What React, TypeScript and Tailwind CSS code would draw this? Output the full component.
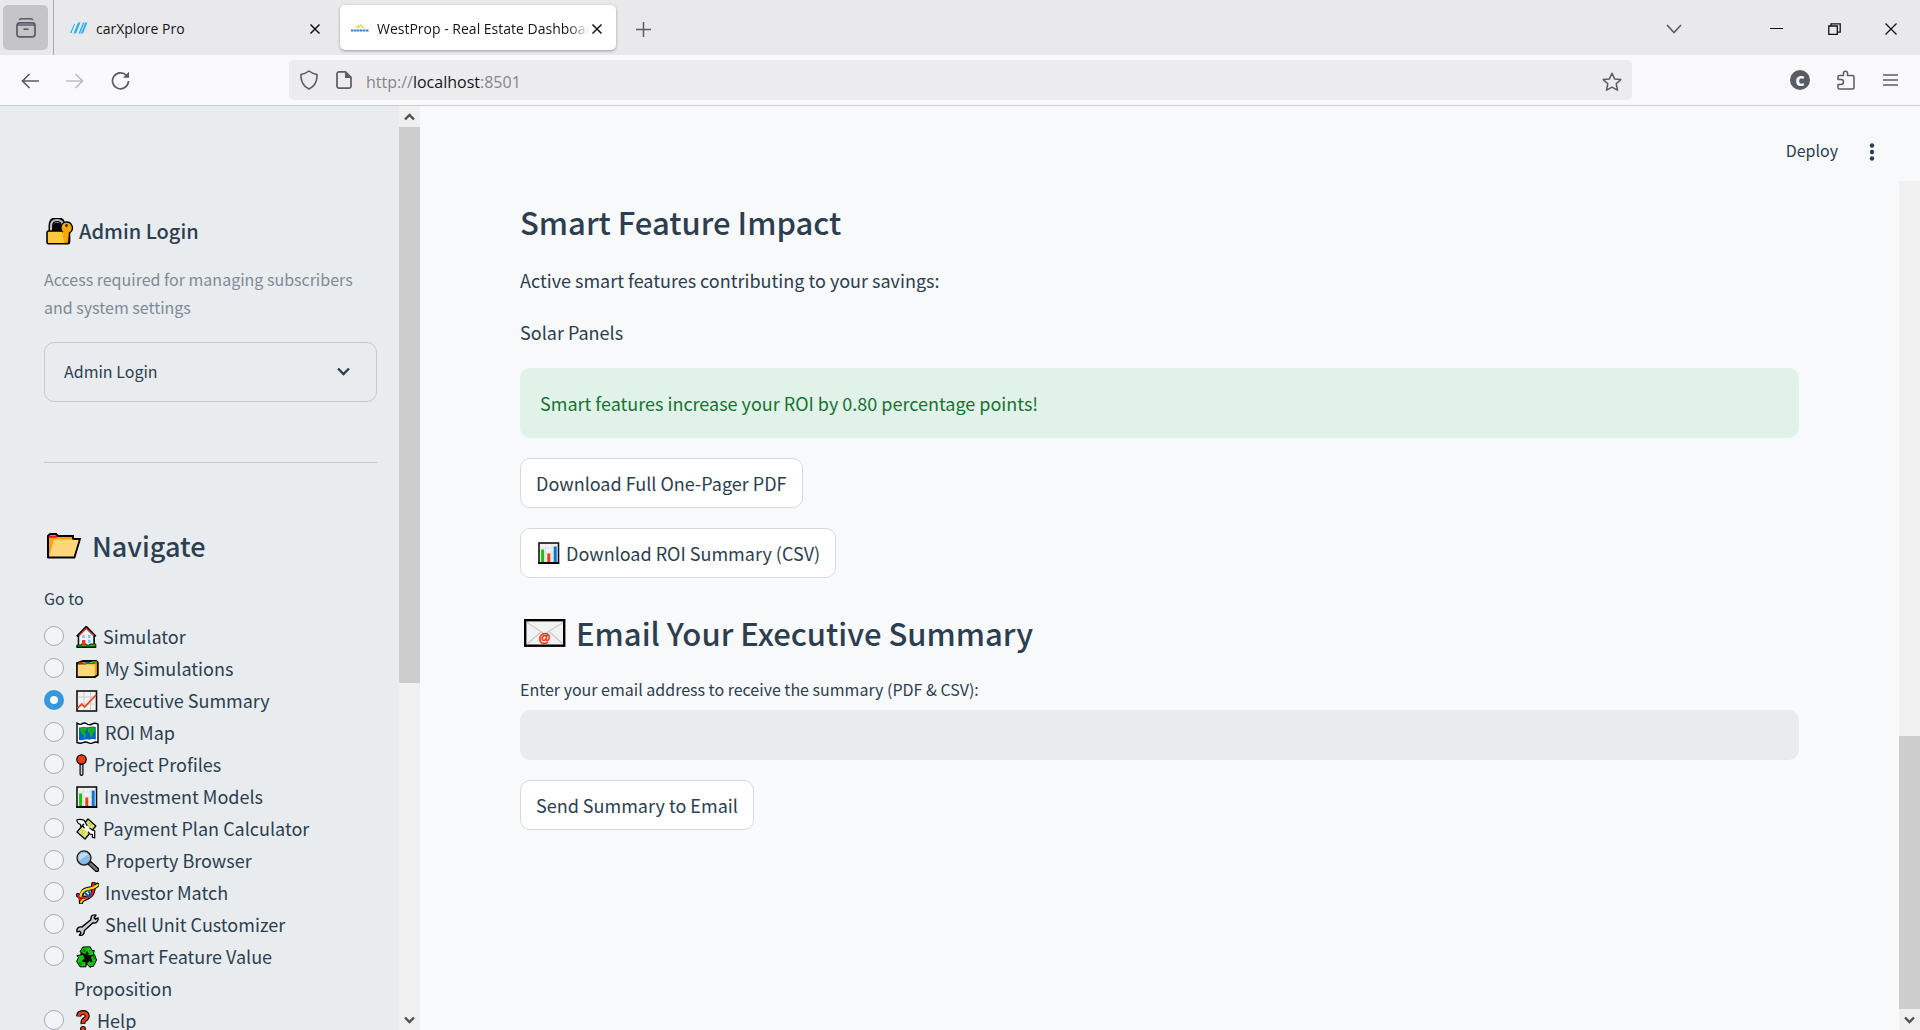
import React, { useState } from "react";

type IconProps = { w: number; h: number; box: string; className?: string; children: React.ReactNode };

function Art({ w, h, box, className = "", children }: IconProps) {
  return (
    <svg
      width={w}
      height={h}
      viewBox={box}
      fill="none"
      aria-hidden="true"
      className={`inline-block shrink-0 ${className}`}
    >
      {children}
    </svg>
  );
}

const navIcon = "ml-0.5 mr-1.5 -mt-1 align-middle";

function BarChartIcon({ className = "" }: { className?: string }) {
  return (
    <Art w={22} h={22} box="0 0 22 22" className={className}>
      <rect x="1" y="1" width="19.5" height="20" fill="#f2f2f2" stroke="#111" strokeWidth="1.6" />
      <path d="M1.8 6h18M1.8 11h18M1.8 16h18M7.5 2v18M14 2v18" stroke="#ddd" strokeWidth="0.8" />
      <path d="M4.6 7.5V20" stroke="#16c60c" strokeWidth="3" />
      <path d="M10.8 11.5V20" stroke="#f03a17" strokeWidth="3" />
      <path d="M17.2 4.5V20" stroke="#0078d7" strokeWidth="3" />
      <path d="M0.2 21h21" stroke="#000" strokeWidth="2" />
    </Art>
  );
}

const items = [
  {
    label: "Simulator",
    icon: (
      <Art w={21} h={22} box="0 0 21 22" className={navIcon}>
        <path d="M2.5 9.5 10.3 2l7.8 7.5V20h-15.6z" fill="#f2f2f2" stroke="#000" strokeWidth="1.6" />
        <path d="M3.4 19.6V9l6.8-6 6.8 6" stroke="#ccc" strokeWidth="0.6" />
        <path d="M1 10.5 10.3 1l9.3 9.5" stroke="#000" strokeWidth="2.4" />
        <path d="M2.8 9.7 10.3 2.4l7.5 7.3" stroke="#f03a17" strokeWidth="1.3" />
        <path d="M6.3 9h2.6v3H6.3zM12 9h2.6v3H12zM12 13.7h2.6v3H12z" fill="#61d6ff" />
        <path d="M0.8 19h4.4v-1h5v1h3.6v-1h6v3.2H0.8z" fill="#16c60c" stroke="#000" strokeWidth="0.8" />
        <path d="M0.4 21.2h19.8" stroke="#000" strokeWidth="1.3" />
        <path d="M6 14v5.6h3.4V14z" fill="#f03a17" />
      </Art>
    ),
  },
  {
    label: "My Simulations",
    icon: (
      <Art w={23} h={18} box="0 0 23 18" className={navIcon}>
        <path d="M1 3 7 1h8l5-.4 1.800 2V15l-3 2H1z" fill="#f7a500" stroke="#000" strokeWidth="1.800" />
        <path d="M2.500 3h5" stroke="#e81224" strokeWidth="1.300" />
        <path d="M9 2.300h5" stroke="#0063b1" strokeWidth="1.300" />
        <path d="M15.500 2h4.800v1.800" stroke="#16c60c" strokeWidth="1.300" />
        <path d="M1.800 4.500h17V15q0 1.200-1.600 1.200H1.800z" fill="#ffd679" />
        <path d="M1.800 4h8l1-.7h8.500" stroke="#000" strokeWidth="0.600" />
      </Art>
    ),
  },
  {
    label: "Executive Summary",
    icon: (
      <Art w={22} h={22} box="0 0 22 22" className={navIcon}>
        <rect x="1" y="1" width="19.5" height="20" fill="#f2f2f2" stroke="#111" strokeWidth="1.6" />
        <path d="M1.8 7h18M1.8 14h18M8 2v18M14.5 2v18" stroke="#ccc" strokeWidth="1" />
        <path d="m1.6 18.3 4.2-4.1 3 2.6L20 5" stroke="#f03a17" strokeWidth="1.6" />
      </Art>
    ),
  },
  {
    label: "ROI Map",
    icon: (
      <Art w={23} h={22} box="0 0 23 22" className={navIcon}>
        <path
          d="M1 1.200q3 2 5.300.5t5.200.6q2.800 1 5-.5 2.300-1.200 5.500.4v18.300q-2.500-1-5.100.300t-5-.3q-2.700-1.200-5 .2-2.700 1.200-5.900-.2z"
          fill="#fff"
          stroke="#000"
          strokeWidth="1.400"
        />
        <path d="M3 5.200q3 .6 5-.5 2.800.9 5.200.2 3.500-.9 6.600 0v12.600q-3.500-1-6.400.3-2.700-.9-5 0-2.600.7-5.400.2z" fill="#0063d1" />
        <path
          d="m4.300 5.800 2.500-.5 4.500.300-.6 2-1.700 1.300-.4 1.700 1.500 1.600-.7 4-1.300.6-.6-3.300-1.800-2L4.300 9zM12.300 6.200l4-.9 2.500.5v3.900l-1.800 1.100-.8 4.200-1.500.6-1-4-1.900-1.500z"
          fill="#16b010"
        />
      </Art>
    ),
  },
  {
    label: "Project Profiles",
    icon: (
      <Art w={12} h={22} box="0 0 12 22" className={navIcon}>
        <path d="M5.500 10v10" stroke="#000" strokeWidth="4" strokeLinecap="round" />
        <path d="M5.500 11v8.800" stroke="#ccc" strokeWidth="1.700" strokeLinecap="round" />
        <circle cx="5.500" cy="5.500" r="4.700" fill="#f03a17" stroke="#000" strokeWidth="1.200" />
      </Art>
    ),
  },
  { label: "Investment Models", icon: <BarChartIcon className={navIcon} /> },
  {
    label: "Payment Plan Calculator",
    icon: (
      <Art w={21} h={22} box="0 0 21 22" className={navIcon}>
        <path d="M1 14 12 1l7.800 7L9 21z" fill="#eff48c" stroke="#000" strokeWidth="1.300" strokeLinejoin="round" />
        <path d="M3.500 14 12 3.600l5.200 4.600L9 18.500z" stroke="#b9bf4a" strokeWidth="0.800" />
        <circle cx="13" cy="7" r="1.500" stroke="#a4ad2c" strokeWidth="0.800" />
        <circle cx="7.500" cy="14" r="1.500" stroke="#a4ad2c" strokeWidth="0.800" />
        <path d="M7 8.500 9.500 6l5.500 6-2.500 2.500z" fill="#fff" />
        <path d="M.8 1.800Q4.500.6 8 2.200l3.200 5.600M.8 1.800Q1 5.500 4.500 6.500l.5 2 2-.3 1.500 2" fill="#fff" stroke="#000" strokeWidth="1.200" strokeLinejoin="round" />
        <path d="M13.500 9.800l2.700 2.200 2.500.8v7.200l-2.400-.8.200-2.700-2.500-.3-2-2.500" fill="#fff" stroke="#000" strokeWidth="1.200" strokeLinejoin="round" />
      </Art>
    ),
  },
  {
    label: "Property Browser",
    icon: (
      <Art w={23} h={22} box="0 0 23 22" className={navIcon}>
        <path d="m12.500 12 8.300 7.700" stroke="#000" strokeWidth="5" strokeLinecap="round" />
        <path d="m14.500 14 6 5.500" stroke="#767676" strokeWidth="2.800" strokeLinecap="round" />
        <circle cx="8" cy="8" r="6.900" fill="#83beec" stroke="#222" strokeWidth="1.500" />
        <path d="M2.800 10.500A5.500 5.500 0 0 1 12.700 4.500z" fill="#b8defa" />
        <circle cx="8" cy="8" r="5.800" stroke="#a8a8a8" strokeWidth="0.900" />
      </Art>
    ),
  },
  {
    label: "Investor Match",
    icon: (
      <Art w={23} h={22} box="0 0 23 22" className={navIcon}>
        <path d="M1.800 13C6 17.500 14 16.500 16.500 11S16 4 17.500 1.500" stroke="#000" strokeWidth="4.200" strokeLinecap="round" />
        <path d="M5 20.500C4 11 7 7.500 12 6.800S19.500 5.500 21.500 2.800" stroke="#000" strokeWidth="4.200" strokeLinecap="round" />
        <path d="M3.500 17 6 18M8 9.500l6 6M11.500 7.500l4.500 5M17 2.500l3.500 1.500" stroke="#3a96dd" strokeWidth="1.300" />
        <path d="M5 20.500C6 17.500 9 17 12 16" stroke="#000" strokeWidth="3.400" strokeLinecap="round" />
        <path d="M5 20.500C5.500 17.500 8.500 17 11 15.800" stroke="#fce100" strokeWidth="1.900" strokeLinecap="round" />
        <path d="M1.800 13C6 17.500 14 16.500 16.500 11S16 4 17.500 1.500" stroke="#e81224" strokeWidth="2.200" strokeLinecap="round" />
        <path d="M4.600 14C5.500 9 8.500 7.300 12 6.800S19.500 5.500 21.500 2.800" stroke="#fce100" strokeWidth="2.200" strokeLinecap="round" />
        <path d="M1.800 13 4.500 18.500" stroke="#e81224" strokeWidth="1.600" strokeLinecap="round" />
        <path d="m8.500 10.500 5 5M12 9l3 3.500" stroke="#0063b1" strokeWidth="1.800" />
      </Art>
    ),
  },
  {
    label: "Shell Unit Customizer",
    icon: (
      <Art w={23} h={22} box="0 0 23 22" className={navIcon}>
        <path
          d="m14.800 5.800.5-3.500Q17.300.200 20 1.200l-1.800 2.600 1.200 1.400 2.600-1.300q.5 3-1.500 4.400-1.700 1.100-3.500.5l-8.800 8q.3 2.400-1.500 4-1.500 1-3.300.4l1.500-2.400-1.200-1.700-2.700.8q-.6-2.900 1.300-4.300 1.500-1.100 3.500-.5z"
          fill="#ccc"
          stroke="#000"
          strokeWidth="1.400"
          strokeLinejoin="round"
        />
      </Art>
    ),
  },
  {
    label: "Smart Feature Value Proposition",
    icon: (
      <Art w={21} h={22} box="0 0 21 22" className={navIcon}>
        <path d="M6 3h8l4 9-2 7H5L3 12z" fill="#000" />
        <g fill="#16c60c" stroke="#000" strokeWidth="1" strokeLinejoin="round">
          <path d="m6.800 1 7.400-.2 2.300 4.200 1.800-.6L17 10.200 10.800 8.800l1.700-1.200-1.500-2L9.300 9 4 5.800z" />
          <path d="m.8 9.800 6.500-1.600 2.200 6-2-.6L6.600 15.600H10v5.200H4L.6 15.500l1.900-4z" />
          <path d="m14.200 11 4.300-2.500 2 5.500-3.200 6.500h-3v1.100L10.500 17.700l3.800-4v2h1.800z" />
        </g>
        <path d="m8 1.800 2.300 2.200-1.700 3-2.600-1.500zM2 16h3.500v3.500H4.300zM16.200 11l1.400 3.300 1.700-1.200-1.200-3.200z" fill="#0f8f0f" />
      </Art>
    ),
  },
  {
    label: "Help",
    icon: (
      <Art w={15} h={22} box="0 0 15 22" className={navIcon}>
        <path d="M2.500 6.500Q2.800 2.600 7 2.600t4.200 3.200Q11.300 8 9 9.300T7 14" stroke="#000" strokeWidth="5" />
        <circle cx="7" cy="18.800" r="2.900" fill="#000" />
        <path d="M2.500 5.800Q3.300 2.600 7 2.600t4.200 3.200Q11.300 8 9 9.300T7 13.400" stroke="#f03a17" strokeWidth="2.900" />
        <circle cx="7" cy="18.800" r="1.800" fill="#f03a17" />
      </Art>
    ),
  },
];

function CloseIcon() {
  return (
    <Art w={12} h={12} box="0 0 12 12">
      <path d="m1.500 1.500 9 9m0-9-9 9" stroke="#15141a" strokeWidth="1.500" />
    </Art>
  );
}

function TabStrip() {
  return (
    <div className="flex h-[55px] shrink-0 items-center bg-[#e9e9eb] font-['Open_Sans','Noto_Sans',sans-serif] text-[#15141a]">
      <button
        aria-label="Recent browsing"
        className="ml-[3px] flex h-[45px] w-[45px] shrink-0 items-center justify-center rounded-[5px] bg-[#c5c5c7]"
      >
        <Art w={20} h={20} box="0 0 20 20">
          <path d="M3 1.800Q4 .8 6 .8h8q2 0 3 1" stroke="#5b5b66" strokeWidth="1.500" />
          <rect x="1" y="4.800" width="18" height="14" rx="2.500" stroke="#5b5b66" strokeWidth="1.700" />
          <path d="M1 7h18" stroke="#5b5b66" strokeWidth="1.500" />
          <path d="M7.500 11.200h5" stroke="#5b5b66" strokeWidth="1.700" />
        </Art>
      </button>
      <div className="ml-[5px] h-full w-px shrink-0 bg-[#a9a9ad]" />
      <div className="flex h-[45px] w-[286px] shrink-0 items-center pr-[19px] pl-4">
        <Art w={18} h={12} box="0 0 18 12">
          <path d="M0 11 4 2h1L1.500 11zM3.500 11.500 8 .5h2.500L6 11.500zM8.500 11.500 13 .5h4.500L13 11.500z" fill="#2fb1ee" />
          <path d="m10.500 11.500 4.500-11" stroke="#e9e9eb" strokeWidth="0.800" />
        </Art>
        <span className="ml-2 flex-1 truncate pt-0.5 text-[14px]">carXplore Pro</span>
        <button aria-label="Close carXplore Pro">
          <CloseIcon />
        </button>
      </div>
      <div className="flex h-[45px] w-[276px] shrink-0 items-center rounded-[5px] bg-white pr-[13px] pl-[11px] shadow-[0_1px_3px_rgba(0,0,0,0.35)]">
        <Art w={18} h={8} box="0 0 18 8">
          <path d="m5 4 2-2 1 1 1.500-2L13 4" stroke="#f2c94c" strokeWidth="1.200" />
          <path d="M0 6.500h18" stroke="#3f7fc4" strokeWidth="2" strokeDasharray="2.500 .5" />
        </Art>
        <span className="ml-2 flex-1 overflow-hidden pt-0.5 text-[14px] whitespace-nowrap [mask-image:linear-gradient(to_right,black_90%,transparent)]">
          WestProp - Real Estate Dashboard
        </span>
        <button aria-label="Close WestProp" className="ml-0.5">
          <CloseIcon />
        </button>
      </div>
      <button aria-label="New tab" className="ml-5">
        <Art w={15} h={15} box="0 0 15 15">
          <path d="M7.500 0v15M0 7.500h15" stroke="#5b5b66" strokeWidth="1.500" />
        </Art>
      </button>
      <div className="ml-auto flex items-center pr-[23px]">
        <button aria-label="List all tabs" className="mr-[88px]">
          <Art w={16} h={10} box="0 0 16 10">
            <path d="m1 1 7 7.500L15 1" stroke="#5b5b66" strokeWidth="1.600" />
          </Art>
        </button>
        <button aria-label="Minimize" className="mr-[45px]">
          <Art w={13} h={12} box="0 0 13 12">
            <path d="M0 5.500h13" stroke="#111" />
          </Art>
        </button>
        <button aria-label="Restore" className="mr-11">
          <Art w={13} h={12} box="0 0 13 12">
            <path d="M.8 3h8.500v8.300H.8zM3 3V.8h9.200v8.400H9.500" stroke="#111" strokeWidth="1.300" />
          </Art>
        </button>
        <button aria-label="Close window">
          <Art w={12} h={12} box="0 0 12 12">
            <path d="m.5.5 11 11m0-11-11 11" stroke="#111" strokeWidth="1.300" />
          </Art>
        </button>
      </div>
    </div>
  );
}

function Toolbar() {
  return (
    <div className="flex h-[51px] shrink-0 items-center border-b border-[#ccccce] bg-[#f9f9fb] font-['Open_Sans','Noto_Sans',sans-serif]">
      <div className="flex w-[289px] shrink-0 items-center pb-0.5 pl-[21px]">
        <button aria-label="Back" className="mr-[27px]">
          <Art w={18} h={16} box="0 0 18 16">
            <path d="M18 8H1.500M8.500 1l-7 7 7 7" stroke="#5b5b66" strokeWidth="1.700" />
          </Art>
        </button>
        <button aria-label="Forward" className="mr-[27px]" disabled>
          <Art w={18} h={16} box="0 0 18 16">
            <path d="M0 8h16.500M9.500 1l7 7-7 7" stroke="#bcbcc2" strokeWidth="1.700" />
          </Art>
        </button>
        <button aria-label="Reload">
          <Art w={19} h={19} box="0 0 19 19">
            <path d="M15.500 4.500A8 8 0 1 0 17.500 10" stroke="#5b5b66" strokeWidth="1.700" />
            <path d="M18 .8v6h-6z" fill="#5b5b66" />
          </Art>
        </button>
      </div>
      <div className="mr-[158px] flex h-10 flex-1 items-center rounded-[5px] bg-[#ececee] pr-[10px] pl-[11px]">
        <Art w={18} h={20} box="0 0 18 20">
          <path d="M9 1Q12 3.400 17 4.500 17.500 15 9 19 .5 15 1 4.500 6 3.400 9 1z" stroke="#5b5b66" strokeWidth="1.600" strokeLinejoin="round" />
        </Art>
        <Art w={16} h={18} box="0 0 16 18" className="ml-[18px]">
          <path d="M3 .9h6.500l5.500 5.500V15a2 2 0 0 1-2 2.100H3A2 2 0 0 1 1 15V3A2 2 0 0 1 3 .9z" stroke="#5b5b66" strokeWidth="1.700" />
          <path d="M9 1v6h6z" fill="#5b5b66" />
        </Art>
        <div className="ml-[14px] flex-1 pt-[3px] text-[16px] text-[#15141a]">
          <span className="text-[#85858a]">http://</span>localhost<span className="text-[#85858a]">:8501</span>
        </div>
        <button aria-label="Bookmark this page">
          <Art w={20} h={20} box="0 0 20 20">
            <path
              d="m10 1.200 2.600 5.700 6.200.7-4.600 4.200 1.300 6.400L10 15.200l-5.500 3 1.300-6.400L1.200 7.600l6.200-.7z"
              stroke="#5b5b66"
              strokeWidth="1.500"
              strokeLinejoin="round"
            />
          </Art>
        </button>
      </div>
      <button
        aria-label="Account"
        className="mr-[27px] flex h-5 w-5 items-center justify-center rounded-full bg-[#5b5b66] text-[14px] font-extrabold text-white"
      >
        C
      </button>
      <button aria-label="Extensions" className="mr-[28px] pb-1">
        <Art w={18} h={20} box="0 0 18 20">
          <path
            d="M1 9.500V7q0-1.500 1.500-1.500h4V3.200a2 2 0 0 1 4 0v2.300h4.800Q17 5.500 17 7v10.500q0 1.500-1.500 1.500h-13Q1 19 1 17.500v-3h3a2.500 2.500 0 0 0 0-5z"
            stroke="#5b5b66"
            strokeWidth="1.500"
            strokeLinejoin="round"
          />
        </Art>
      </button>
      <button aria-label="Application menu" className="mr-[22px] pb-1">
        <Art w={15} h={12} box="0 0 15 12">
          <path d="M0 1h15M0 6h15M0 11h15" stroke="#5b5b66" strokeWidth="1.400" />
        </Art>
      </button>
    </div>
  );
}

function Arrow({ up = false }: { up?: boolean }) {
  return (
    <div className="flex h-[21px] shrink-0 items-center justify-center">
      <Art w={11} h={8} box="0 0 11 8" className={up ? "rotate-180" : ""}>
        <path d="m1 1.500 4.500 4.500L10 1.500" stroke="#505050" strokeWidth="2.400" />
      </Art>
    </div>
  );
}

function Sidebar() {
  const [page, setPage] = useState("Executive Summary");
  return (
    <aside className="flex w-[420px] shrink-0 bg-[#e8ecef]">
      <div className="min-w-0 flex-1 overflow-hidden pt-[107px] pr-[22px] pl-11">
        <h3 className="flex h-9 items-center text-[20px] leading-9 font-medium">
          <Art w={28} h={27} box="0 0 28 27" className="mr-[5px] ml-0.5">
            <path d="M5 14V8q0-6.500 6-6.500T17 8v6" stroke="#000" strokeWidth="5" />
            <path d="M5 14V8q0-6 6-6t6 6v6" stroke="#bbb" strokeWidth="2.200" />
            <path d="M7 8q0-3.500 4-3.500T15 8v5H7z" fill="#000" />
            <rect x="1" y="13" width="22.500" height="12.800" rx="1.500" fill="#ffc83d" stroke="#000" strokeWidth="1.600" />
            <path d="M18.500 13.800h4.200V25H18z" fill="#e39a00" />
            <path d="M20.500 4a5.800 5.800 0 0 1 3 10.800l-.8 9.700-4-1.500 1-7.500A5.800 5.800 0 0 1 20.500 4z" fill="#f7a500" stroke="#000" strokeWidth="1.300" />
            <path d="M16.500 13.800h5.300v11h-3.800z" fill="#f7a500" />
            <circle cx="20.500" cy="7.500" r="1.200" fill="#000" />
          </Art>
          Admin Login
        </h3>
        <p className="mt-4 text-[16px] leading-7 text-[#7f8a97]">
          Access required for managing subscribers and system settings
        </p>
        <button className="mt-[21px] flex h-[60px] w-full items-center justify-between rounded-[10px] border border-[#c3c8ce] pr-[26px] pb-0.5 pl-[19px] text-[16px]">
          Admin Login
          <Art w={13} h={9} box="0 0 13 9">
            <path d="m1 1.500 5.500 5.500L12 1.500" stroke="#2c3e50" strokeWidth="2.300" />
          </Art>
        </button>
        <hr className="mt-[60px] border-[#c3c8ce]" />
        <h2 className="mt-[61px] flex h-11 items-center text-[27px] leading-[44px] font-medium">
          <Art w={36} h={26} box="0 0 36 26" className="mr-[10px] ml-[2px]">
            <path d="M2 24V3l2-2h6l2 2h15v3h6l-5 18z" fill="#f7a500" stroke="#000" strokeWidth="2" />
            <path d="M3 3.800h8" stroke="#e81224" strokeWidth="2" />
            <path d="M3 24 8 6.500h25.500L28 24z" fill="#ffd679" />
            <path d="M27.500 6H34l-5.600 18.500H1.500" stroke="#000" strokeWidth="1.800" />
          </Art>
          Navigate
        </h2>
        <fieldset className="mt-4">
          <legend className="h-7 text-[16px] leading-7">Go to</legend>
          <div className="mt-2">
            {items.map(({ label, icon }) => (
              <label key={label} className="flex cursor-pointer items-start gap-[10px] text-[18px] leading-8">
                <input
                  type="radio"
                  name="page"
                  checked={page === label}
                  onChange={() => setPage(label)}
                  className="mt-1.5 h-5 w-5 shrink-0 appearance-none rounded-full border border-[#a3abb5] bg-[#f1f3f5] checked:border-[6px] checked:border-[#3498db] checked:bg-[#f8f9fb]"
                />
                <span className="w-60">
                  {icon}
                  {label}
                </span>
              </label>
            ))}
          </div>
        </fieldset>
      </div>
      <div className="flex w-[21px] shrink-0 flex-col bg-[#f0f0f0]" aria-hidden="true">
        <Arrow up />
        <div className="flex-1">
          <div className="h-[63%] bg-[#cdcdcd]" />
        </div>
        <Arrow />
      </div>
    </aside>
  );
}

const outlined = "flex h-[50px] items-center rounded-[10px] border border-[#d5d9de] bg-white px-[15px] text-[18px]";

function MainPanel() {
  return (
    <div className="flex min-w-0 flex-1 flex-col bg-[#f8f9fb]">
      <header className="flex h-[75px] shrink-0 items-center justify-end pt-3 pr-[45px]">
        <button className="mr-[31px] text-[16px] leading-7">Deploy</button>
        <button aria-label="Main menu">
          <Art w={6} h={18} box="0 0 6 18">
            <g fill="#2c3e50">
              <circle cx="3" cy="2.500" r="2.200" />
              <circle cx="3" cy="9" r="2.200" />
              <circle cx="3" cy="15.500" r="2.200" />
            </g>
          </Art>
        </button>
      </header>
      <div className="flex min-h-0 flex-1">
        <main className="flex min-w-0 flex-1 flex-col items-start px-[100px] pt-[19px]">
          <h2 className="text-[31px] leading-[44px] font-medium">Smart Feature Impact</h2>
          <p className="mt-5 text-[18px] leading-8">Active smart features contributing to your savings:</p>
          <p className="mt-5 text-[18px] leading-8">Solar Panels</p>
          <div role="alert" className="mt-5 flex h-[70px] w-full items-center rounded-[10px] bg-[#e1f3e8] px-5 text-[18px] text-[#177233]">
            Smart features increase your ROI by 0.80 percentage points!
          </div>
          <button className={`mt-5 ${outlined}`}>Download Full One-Pager PDF</button>
          <button className={`mt-5 ${outlined}`}>
            <BarChartIcon className="mr-1.5 ml-0.5" />
            Download ROI Summary (CSV)
          </button>
          <h2 className="mt-[33px] flex h-11 items-center text-[31px] leading-[44px] font-medium">
            <Art w={42} h={28} box="0 0 42 28" className="mr-[10px] ml-1">
              <rect x="1.200" y="1.200" width="39" height="25.500" fill="#f2f2f2" stroke="#000" strokeWidth="2.400" />
              <path d="m3 25 14.500-12.500M39 25 25 12.500M3 3.500 20.700 15 39 3.500" stroke="#ccc" strokeWidth="1.400" />
              <text
                x="20.500"
                y="23"
                textAnchor="middle"
                fill="#f03a17"
                stroke="#f03a17"
                strokeWidth="0.600"
                fontSize="12"
                fontWeight="700"
                fontFamily="Liberation Sans"
              >
                @
              </text>
            </Art>
            Email Your Executive Summary
          </h2>
          <label htmlFor="email" className="mt-5 text-[16px] leading-7">
            Enter your email address to receive the summary (PDF &amp; CSV):
          </label>
          <input
            id="email"
            type="email"
            className="mt-[7px] h-[50px] w-full shrink-0 rounded-[10px] bg-[#e8ecef] px-4 text-[18px] outline-none"
          />
          <button className={`mt-5 ${outlined}`}>Send Summary to Email</button>
        </main>
        <div className="flex w-[21px] shrink-0 flex-col bg-[#f0f0f0]" aria-hidden="true">
          <div className="flex flex-1 flex-col justify-end">
            <div className="h-[33%] bg-[#cdcdcd]" />
          </div>
          <Arrow />
        </div>
      </div>
    </div>
  );
}

export default function App() {
  return (
    <div className="flex h-screen flex-col overflow-hidden">
      <TabStrip />
      <Toolbar />
      <div className="flex min-h-0 flex-1 font-['Noto_Sans_CJK_SC',sans-serif] text-[#2c3e50]">
        <Sidebar />
        <MainPanel />
      </div>
    </div>
  );
}
